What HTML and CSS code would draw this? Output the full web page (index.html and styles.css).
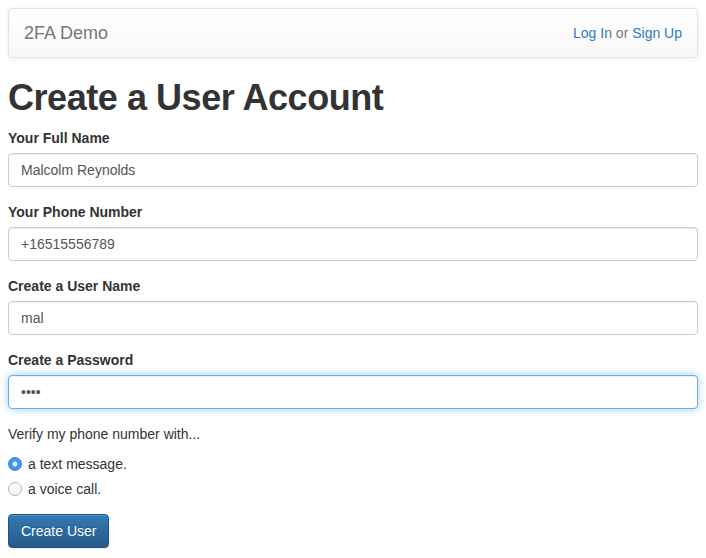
FILE: index.html
```html
<!DOCTYPE html>
<html lang="en">
<head>
<meta charset="utf-8">
<title>2FA Demo</title>
<link rel="stylesheet" href="styles.css">
</head>
<body>
<div class="page">
  <nav class="navbar">
    <a class="brand" href="#">2FA Demo</a>
    <p class="navbar-text"><a href="#">Log In</a> or <a href="#">Sign Up</a></p>
  </nav>
  <h1 class="title">Create a User Account</h1>
  <form class="form">
    <div class="form-group">
      <label class="field-label" for="fullName">Your Full Name</label>
      <input class="form-control" id="fullName" type="text" value="Malcolm Reynolds">
    </div>
    <div class="form-group">
      <label class="field-label" for="phone">Your Phone Number</label>
      <input class="form-control" id="phone" type="text" value="+16515556789">
    </div>
    <div class="form-group">
      <label class="field-label" for="username">Create a User Name</label>
      <input class="form-control" id="username" type="text" value="mal">
    </div>
    <div class="form-group">
      <label class="field-label" for="password">Create a Password</label>
      <input class="form-control is-focused" id="password" type="password" value="abcd">
    </div>
    <p class="verify">Verify my phone number with...</p>
    <div class="radio-group">
      <label class="radio"><input class="radio-input" type="radio" name="method" checked><span>a text message.</span></label>
      <label class="radio"><input class="radio-input" type="radio" name="method"><span>a voice call.</span></label>
    </div>
    <button class="btn-primary" type="button">Create User</button>
  </form>
</div>
</body>
</html>
```

FILE: styles.css
```css
* { box-sizing: border-box; }
html, body { margin: 0; padding: 0; background: #fff; }
body {
  font-family: "Liberation Sans", Arial, Helvetica, sans-serif;
  font-size: 14px;
  line-height: 20px;
  color: #333;
}
.page { padding: 8px; }

.navbar {
  display: flex;
  align-items: center;
  justify-content: space-between;
  height: 50px;
  border: 1px solid #e3e3e3;
  border-radius: 4px;
  background: linear-gradient(to bottom, #ffffff 0%, #f8f8f8 100%);
  box-shadow: inset 0 1px 0 rgba(255,255,255,.15), 0 1px 5px rgba(0,0,0,.075);
  margin-bottom: 20px;
}
.brand {
  padding: 0 15px;
  font-size: 18px;
  line-height: 20px;
  color: #777;
  text-decoration: none;
  text-shadow: 0 1px 0 rgba(255,255,255,.25);
}
.navbar-text {
  margin: 0 15px;
  color: #777;
}
.navbar-text a { color: #337ab7; text-decoration: none; }

.title {
  font-size: 36px;
  font-weight: 700;
  letter-spacing: -0.45px;
  line-height: 1.1;
  margin: 20px 0 10px;
  color: #333;
}

.form-group { margin-bottom: 15px; }
.field-label {
  display: inline-block;
  font-weight: 700;
  margin-bottom: 5px;
}
.form-control {
  display: block;
  width: 100%;
  height: 34px;
  padding: 6px 12px;
  font-family: inherit;
  font-size: 14px;
  line-height: 20px;
  color: #555;
  background: #fff;
  border: 1px solid #ccc;
  border-radius: 4px;
  box-shadow: inset 0 1px 1px rgba(0,0,0,.075);
  outline: none;
  margin: 0;
}
.form-control.is-focused {
  border-color: #66afe9;
  box-shadow: inset 0 1px 1px rgba(0,0,0,.075), 0 0 8px rgba(102,175,233,.6);
}

.verify { margin: 0 0 10px; }

.radio-group {
  display: flex;
  flex-direction: column;
  gap: 5px;
  margin-bottom: 15px;
}
.radio {
  display: flex;
  align-items: center;
  gap: 6px;
  min-height: 20px;
  cursor: pointer;
}
.radio-input {
  appearance: none;
  -webkit-appearance: none;
  width: 14px;
  height: 14px;
  margin: 0;
  border-radius: 50%;
  border: 1px solid #b5b5b5;
  background: linear-gradient(to bottom, #ffffff, #f3f3f3);
  flex: none;
  position: relative;
}
.radio-input:checked {
  border-color: #2f86f0;
  background: radial-gradient(circle, #fff 0, #fff 2.2px, #3c95f7 2.8px);
}

.btn-primary {
  display: inline-block;
  height: 34px;
  padding: 6px 12px;
  font-family: inherit;
  font-size: 14px;
  line-height: 20px;
  color: #fff;
  border: 1px solid #245580;
  border-radius: 4px;
  background: linear-gradient(to bottom, #337ab7 0%, #265a88 100%);
  text-shadow: 0 -1px 0 rgba(0,0,0,.2);
  box-shadow: inset 0 1px 0 rgba(255,255,255,.15), 0 1px 1px rgba(0,0,0,.075);
  cursor: pointer;
}
```
